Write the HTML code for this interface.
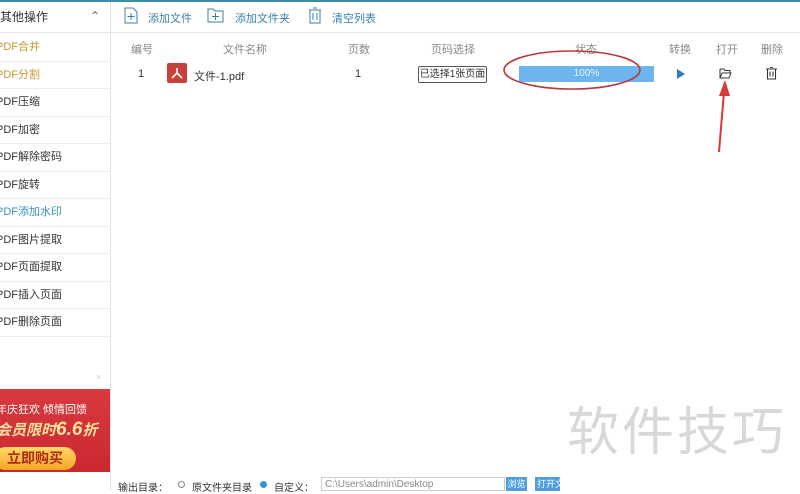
<!DOCTYPE html>
<html><head><meta charset="utf-8"><style>
*{margin:0;padding:0;box-sizing:border-box}
body{width:800px;height:490px;overflow:hidden;background:#fff;font-family:"Liberation Sans","Noto Sans CJK SC",sans-serif;font-size:11px;color:#333;position:relative}
.a{position:absolute}
#top{left:0;top:0;width:800px;height:2px;background:#3a8fa8}
#side{left:0;top:2px;width:111px;height:488px;border-right:1px solid #e3e3e3;background:#fff}
.hd{position:absolute;left:0;top:0;width:110px;height:31px;border-bottom:1px solid #e5e5e5;font-size:12px;line-height:31px;padding-left:0;color:#333}
.it{position:absolute;left:0;width:110px;height:27.5px;border-bottom:1px solid #ececec;line-height:27px;font-size:11px;color:#333;text-indent:-4px}
#tool{left:111px;top:2px;width:689px;height:31px;border-bottom:1px solid #e8e8e8}
.tb{position:absolute;top:8px;font-size:11px;color:#3a7fa6}
.th{position:absolute;top:41px;font-size:11px;color:#888}
</style></head><body>
<div class="a" id="top"></div>
<div class="a" id="side">
<div class="hd">其他操作<span style="position:absolute;left:90px;top:-1px;color:#666">&#8963;</span></div>
<div class="it" style="top:32px;color:#c8962f">PDF合并</div>
<div class="it" style="top:59.5px;color:#c8962f">PDF分割</div>
<div class="it" style="top:87px">PDF压缩</div>
<div class="it" style="top:114.5px">PDF加密</div>
<div class="it" style="top:142px">PDF解除密码</div>
<div class="it" style="top:169.5px">PDF旋转</div>
<div class="it" style="top:197px;color:#3a8fbf">PDF添加水印</div>
<div class="it" style="top:224.5px">PDF图片提取</div>
<div class="it" style="top:252px">PDF页面提取</div>
<div class="it" style="top:279.5px">PDF插入页面</div>
<div class="it" style="top:307px">PDF删除页面</div>
<div class="a" style="left:96px;top:370px;color:#ccc;font-size:9px">×</div>
<div class="a" style="left:0;top:387px;width:110px;height:83px;background:linear-gradient(#d83a3f,#c9282f);color:#fff">
<div class="a" style="left:-4px;top:12px;font-size:11px;white-space:nowrap">年庆狂欢 倾情回馈</div>
<div class="a" style="left:-4px;top:30px;font-size:15px;font-weight:bold;font-style:italic;color:#ffe1a0;white-space:nowrap">会员限时<span style="font-size:19px">6.6</span>折</div>
<div class="a" style="left:-6px;top:58px;width:82px;height:23px;border-radius:12px;background:linear-gradient(#ffd96a,#f5a623);color:#b02a10;font-size:14px;font-weight:bold;line-height:23px;text-align:center">立即购买</div>
</div>
</div>
<div class="a" id="tool">
<svg class="a" style="left:13px;top:5px" width="14" height="17"><path d="M1 1h8l4 4v11H1z" fill="none" stroke="#3a7fa6"/><path d="M7 6v7M3.5 9.5h7" stroke="#3a7fa6"/></svg>
<span class="tb" style="left:37px">添加文件</span>
<svg class="a" style="left:96px;top:6px" width="17" height="15"><path d="M1 1h5l2 2h8v11H1z" fill="none" stroke="#3a7fa6"/><path d="M8.5 5v7M5 8.5h7" stroke="#3a7fa6"/></svg>
<span class="tb" style="left:124px">添加文件夹</span>
<svg class="a" style="left:197px;top:5px" width="14" height="17"><path d="M1 3h12M5 1h4M2 3v13h10V3M5 6v7M9 6v7" fill="none" stroke="#3a7fa6"/></svg>
<span class="tb" style="left:221px">清空列表</span>
</div>
<span class="th" style="left:131px">编号</span>
<span class="th" style="left:223px">文件名称</span>
<span class="th" style="left:348px">页数</span>
<span class="th" style="left:431px">页码选择</span>
<span class="th" style="left:575px">状态</span>
<span class="th" style="left:669px">转换</span>
<span class="th" style="left:716px">打开</span>
<span class="th" style="left:761px">删除</span>
<span class="a" style="left:138px;top:68px;font-size:11px">1</span>
<div class="a" style="left:167px;top:63px;width:20px;height:20px;background:#c9403c;border-radius:2px"></div>
<svg class="a" style="left:170px;top:66px" width="14" height="14"><path d="M7 2L7 7M7 7L2 12M7 7L12 12" stroke="#fff" stroke-width="1.6" fill="none"/></svg>
<span class="a" style="left:194px;top:68px;font-size:11px">文件-1.pdf</span>
<span class="a" style="left:355px;top:68px;font-size:11px">1</span>
<div class="a" style="left:418px;top:66px;width:69px;height:17px;border:1px solid #555;border-radius:2px;font-size:10px;line-height:15px;text-align:center">已选择1张页面</div>
<div class="a" style="left:519px;top:66px;width:135px;height:16px;background:#6cb5ee;color:#e8f4ff;font-size:10px;text-align:center;line-height:16px">100%</div>
<svg class="a" style="left:500px;top:47px" width="150" height="46"><ellipse cx="72" cy="23" rx="68" ry="19" fill="none" stroke="#b83a3a" stroke-width="1.6"/></svg>
<svg class="a" style="left:677px;top:69px" width="8" height="10"><path d="M0 0L8 5L0 10z" fill="#2d7cc0"/></svg>
<svg class="a" style="left:719px;top:68px" width="13" height="11"><path d="M1 1h4l1 1.5h5v2M1 1v9h9l2-5H3L1 10" fill="none" stroke="#333"/></svg>
<svg class="a" style="left:766px;top:67px" width="11" height="13"><path d="M0 2h11M4 0.5h3M1.5 2v10h8V2M4 4.5v5M7 4.5v5" fill="none" stroke="#333" stroke-width="1.1"/></svg>
<svg class="a" style="left:712px;top:78px" width="20" height="76"><path d="M7 74L12 14" stroke="#d63a36" stroke-width="2"/><path d="M13 2L7 18L18 18z" fill="#d63a36"/></svg>
<div class="a" style="left:567px;top:390px;font-size:52px;color:#d8d8d8;letter-spacing:3px;white-space:nowrap">软件技巧</div>
<div class="a" style="left:118px;top:479px;font-size:10px;color:#333;white-space:nowrap">输出目录：</div>
<div class="a" style="left:178px;top:481px;width:7px;height:7px;border:1px solid #888;border-radius:50%"></div>
<div class="a" style="left:192px;top:479px;font-size:10px">原文件夹目录</div>
<div class="a" style="left:260px;top:481px;width:7px;height:7px;border-radius:50%;background:#3a8fd8"></div>
<div class="a" style="left:274px;top:479px;font-size:10px">自定义：</div>
<div class="a" style="left:321px;top:477px;width:184px;height:14px;border:1px solid #ccc;font-size:10px;color:#888;padding-left:3px;line-height:13px">C:\Users\admin\Desktop</div>
<div class="a" style="left:506px;top:477px;width:21px;height:14px;background:#4f9fe0;color:#fff;font-size:9px;text-align:center;line-height:14px">浏览</div>
<div class="a" style="left:535px;top:477px;width:25px;height:14px;background:#4f9fe0;color:#fff;font-size:9px;line-height:14px;overflow:hidden;white-space:nowrap;padding-left:2px">打开文</div>
</body></html>
